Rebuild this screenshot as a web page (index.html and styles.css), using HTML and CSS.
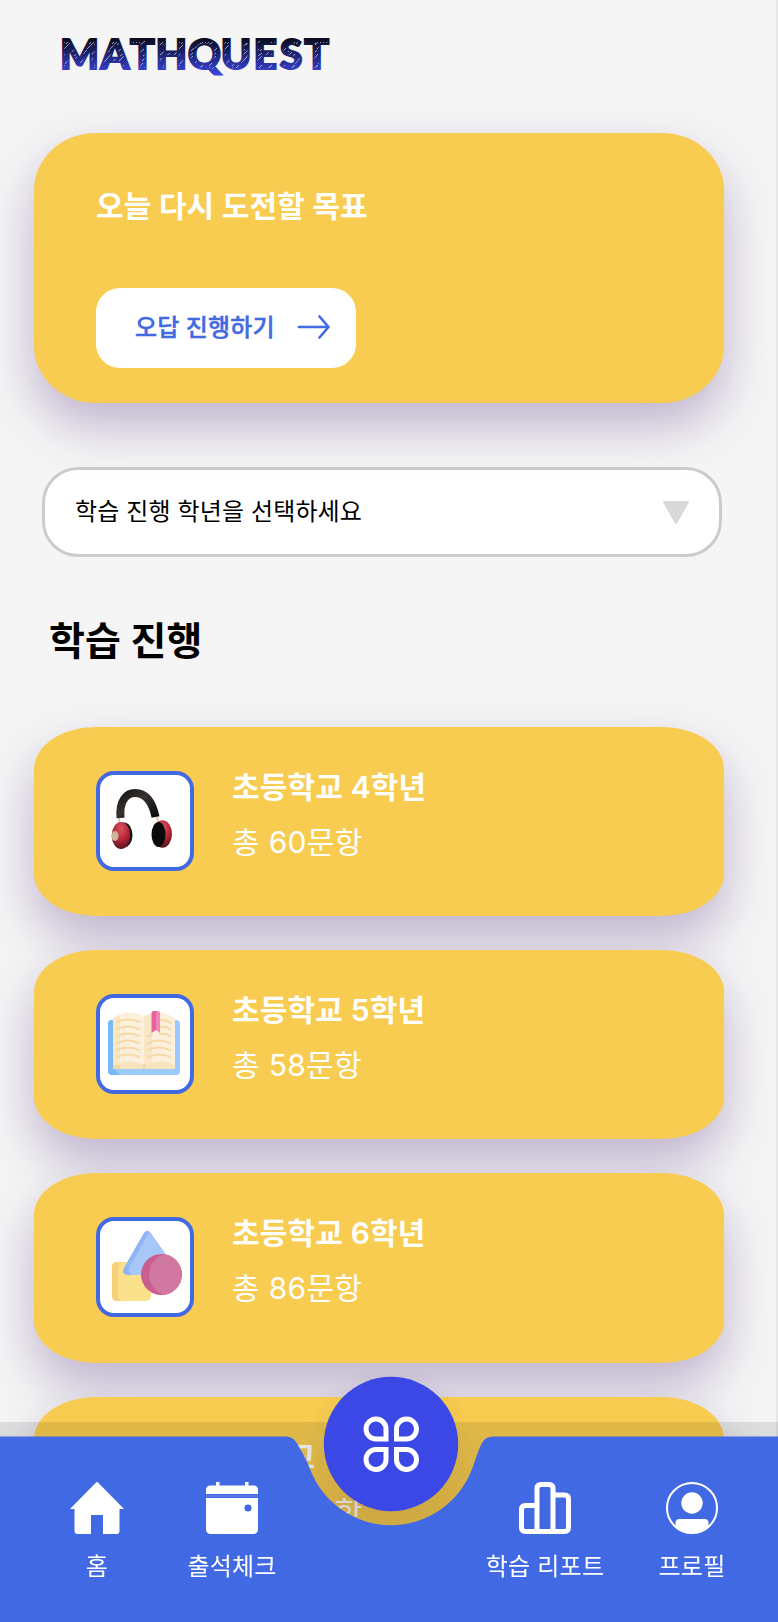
FILE: index.html
```html
<!DOCTYPE html>
<html lang="ko">
<head>
<meta charset="utf-8">
<title>MATHQUEST</title>
<link rel="stylesheet" href="styles.css">
</head>
<body>
<div class="app">
  <header class="header">
    <svg class="logo" width="280" height="56" viewBox="0 0 280 56">
      <defs>
        <linearGradient id="ink" gradientUnits="userSpaceOnUse" x1="0" y1="8" x2="0" y2="43">
          <stop offset="0" stop-color="#0b0d20"/><stop offset=".45" stop-color="#1f2474"/><stop offset="1" stop-color="#3a46dc"/>
        </linearGradient>
        <pattern id="hatch" patternUnits="userSpaceOnUse" width="23" height="56">
          <rect width="23" height="56" fill="url(#ink)"/>
          <path d="M1 17l6-5M8 18l7-7M15 14l5-4M3 24l5-5M12 24l7-6M1 32l4-4M9 33l5-6M17 30l5-5M3 39l5-4M12 40l4-4M18 38l4-4M6 14l3-3M20 20l3-3M5 28l4-5M15 35l3-3M2 21l3-3M18 25l4-3M10 13l2-2M7 36l2-2" stroke="#d5d8ea" stroke-width="1" stroke-opacity=".7"/>
        </pattern>
      </defs>
      <text class="logo-text" x="23.500 59 86.500 115.300 148.500 180 209.300 235 260.700" y="38.300" fill="url(#hatch)" stroke="url(#ink)" stroke-width="2">MATHQUEST</text>
    </svg>
  </header>

  <section class="card hero">
    <h2 class="card-title">오늘 다시 도전할 목표</h2>
    <button class="retry">
      <span class="retry-label">오답 진행하기</span>
      <svg width="34" height="26" viewBox="0 0 34 26" fill="none" stroke="#4169e1" stroke-width="2.600" stroke-linecap="round" stroke-linejoin="round"><path d="M2 12H31.500M22.500 1.500L31.500 12L22.500 22.500"/></svg>
    </button>
  </section>

  <div class="select">
    <span class="select-label">학습 진행 학년을 선택하세요</span>
    <svg width="26" height="24" viewBox="0 0 26 24"><path d="M1 2H25L13 23Z" fill="#d9d9d9" stroke="#d9d9d9" stroke-width="2" stroke-linejoin="round"/></svg>
  </div>

  <h1 class="section-title">학습 진행</h1>

  <main class="list">
    <article class="card course">
      <div class="thumb">
        <svg width="90" height="92" viewBox="0 0 90 92">
          <defs>
            <linearGradient id="band" x1="0" y1="0" x2="1" y2="1"><stop offset="0" stop-color="#181716"/><stop offset=".4" stop-color="#37322f"/><stop offset="1" stop-color="#0c0c0c"/></linearGradient>
            <radialGradient id="cup" cx=".5" cy=".25" r=".75"><stop offset="0" stop-color="#d85661"/><stop offset=".55" stop-color="#b52536"/><stop offset="1" stop-color="#5c1420"/></radialGradient>
          </defs>
          <path d="M19 43L19.500 49M57 42L58.500 48" stroke="#e0c5b0" stroke-width="2"/>
          <path d="M20.500 43C19 25 27 18 35 18C45 18 52 25 55.500 42" fill="none" stroke="url(#band)" stroke-width="8"/>
          <ellipse cx="24" cy="60" rx="8.500" ry="12.500" fill="#171314"/>
          <ellipse cx="21" cy="60.500" rx="9.300" ry="13.500" fill="url(#cup)"/>
          <ellipse cx="15" cy="61" rx="3.500" ry="5" fill="#cdb49c"/>
          <ellipse cx="62.500" cy="59" rx="9.500" ry="13.700" fill="url(#cup)"/>
          <ellipse cx="58.500" cy="59.500" rx="7" ry="12.500" fill="#0b0a0a"/>
        </svg>
      </div>
      <div class="info"><h3 class="card-title">초등학교 4학년</h3><p class="count">총 60문항</p></div>
    </article>

    <article class="card course">
      <div class="thumb">
        <svg width="90" height="92" viewBox="0 0 90 92">
          <rect x="8" y="22" width="72" height="55" rx="4" fill="#9bcaff"/>
          <path d="M12 22H14V71L20 77H12Q8 77 8 73V26Q8 22 12 22Z" fill="#78b9f8"/>
          <path d="M13 20Q28 10 44 18V71H15Q13 71 13 69Z" fill="#fcf0dc"/>
          <path d="M13 20L20 17V66L13 68Z" fill="#f8e6c5"/>
          <path d="M44 18Q60 10 75 20V69Q75 71 73 71H44Z" fill="#fcf0dc"/>
          <path d="M44 18L52 15V65L44 69Z" fill="#f8e6c5"/>
          <path d="M13 67Q29 60 44 67Q60 60 75 67V71H13Z" fill="#f9e3bd"/>
          <path d="M13 67H20V71H15Q13 71 13 69ZM43 66H45V71H43Z" fill="#f5d6a0"/>
          <path d="M17 24Q28 19 39 24M17 31Q28 26 39 31M17 38Q28 33 39 38M17 45Q28 40 39 45M17 52Q28 47 39 52M17 59Q28 54 39 59M60 22Q66 21 70 25M60 29Q66 28 70 31M60 36Q66 35 70 38M48 38L51 37M48 45Q59 40 70 45M48 52Q59 47 70 52M48 59Q59 54 70 59" fill="none" stroke="#f6d9a5" stroke-width="2.200" stroke-linecap="round"/>
          <path d="M54 13H58V32L56 32L51.500 35V15Q51.500 13 54 13Z" fill="#e8609e"/>
          <path d="M56 13H58Q60 13 60 15V35L56 32Z" fill="#f284b8"/>
        </svg>
      </div>
      <div class="info"><h3 class="card-title">초등학교 5학년</h3><p class="count">총 58문항</p></div>
    </article>

    <article class="card course">
      <div class="thumb">
        <svg width="90" height="92" viewBox="0 0 90 92">
          <rect x="12" y="41" width="39" height="39" rx="5" fill="#fae08b"/>
          <path d="M17 41H23Q18 41 18 46V75Q18 80 23 80H17Q12 80 12 75V46Q12 41 17 41Z" fill="#f7d078"/>
          <path d="M44 12Q47.500 8 51 12L76 48Q78 54 73 54H28Q21 53 24 47Z" fill="#a6c7f8"/>
          <path d="M44 12Q46 9 49.500 10.500L29 47Q28 53 33 54H28Q21 53 24 47Z" fill="#8eb5f5"/>
          <circle cx="61.500" cy="53.500" r="20.500" fill="#cb5d8f"/>
          <path d="M64 33.200A20.500 20.500 0 0 1 64 73.800C44 67 44 40 64 33.200Z" fill="#d078a0"/>
        </svg>
      </div>
      <div class="info"><h3 class="card-title">초등학교 6학년</h3><p class="count">총 86문항</p></div>
    </article>

    <article class="card course">
      <div class="thumb"></div>
      <div class="info"><h3 class="card-title">중학교 1학년</h3><p class="count">총 60문항</p></div>
    </article>
  </main>

  <nav class="nav">
    <svg class="nav-shape" width="778" height="252" viewBox="0 0 778 252">
      <defs>
        <linearGradient id="shade" x1="0" y1="0" x2="0" y2="1"><stop offset="0" stop-color="#000" stop-opacity=".09"/><stop offset="1" stop-color="#000" stop-opacity=".15"/></linearGradient>
        <radialGradient id="halo" gradientUnits="userSpaceOnUse" cx="391" cy="78" r="86"><stop offset=".76" stop-color="#000" stop-opacity=".03"/><stop offset="1" stop-color="#000" stop-opacity="0"/></radialGradient>
      </defs>
      <rect y="52" width="778" height="105" fill="url(#shade)"/>
      <circle cx="391" cy="78" r="86" fill="url(#halo)"/>
      <path d="M0 66.500H284C291 66.500 294.500 68.500 298 75C303 84 306 88.500 310 99A86.500 86.500 0 0 0 472 99C476 88.500 478 81 481 75C484 68.500 487 66.500 496 66.500H778V252H0Z" fill="#4169e3"/>
      <circle cx="391" cy="74" r="67.200" fill="#3b48e5"/>
      <g fill="none" stroke="#fff" stroke-width="5" stroke-linejoin="miter">
        <path d="M386 69V59.500A10 10 0 1 0 376 69Z"/>
        <path d="M396.500 69V59.500A10 10 0 1 1 406.500 69Z"/>
        <path d="M386 79.500V89A10 10 0 1 1 376 79.500Z"/>
        <path d="M396.500 79.500V89A10 10 0 1 0 406.500 79.500Z"/>
      </g>
    </svg>
    <div class="nav-items">
      <a class="nav-item home">
        <svg width="56" height="52" viewBox="0 0 56 52"><path d="M26.500 1Q28 -1 29.500 1L55 27H50.500V49Q50.500 52 47.500 52H34V33H22V52H8.500Q5.500 52 5.500 49V27H1Z" fill="#fff"/></svg>
        <span>홈</span>
      </a>
      <a class="nav-item attend">
        <svg width="52" height="52" viewBox="0 0 52 52" fill="#fff"><path d="M0 12V8Q0 3.500 4.500 3.500H10V0H13.500V3.500H39V0H42.500V3.500H47.500Q52 3.500 52 8V12ZM0 16H52V47Q52 52 47 52H5Q0 52 0 47Z"/><path d="M0 14H52" stroke="#fff" stroke-opacity=".25" stroke-width="1"/><circle cx="42" cy="26" r="3.600" fill="#4169e3"/></svg>
        <span>출석체크</span>
      </a>
      <a class="nav-item report">
        <svg width="52" height="52" viewBox="0 0 52 52" fill="none" stroke="#fff" stroke-width="5"><path d="M18 49.500H6.500Q2.500 49.500 2.500 45.500V27.500Q2.500 23.500 6.500 23.500H18M18 49.500V6.500Q18 2.500 22 2.500H30Q34 2.500 34 6.500V49.500ZM34 13H45.500Q49.500 13 49.500 17V45.500Q49.500 49.500 45.500 49.500H34"/></svg>
        <span>학습 리포트</span>
      </a>
      <a class="nav-item profile">
        <svg width="52" height="52" viewBox="0 0 52 52"><circle cx="26" cy="26" r="25" fill="none" stroke="#fff" stroke-width="2"/><circle cx="26" cy="21" r="10.700" fill="#fff"/><path d="M9.500 44V41Q9.500 37 13.500 37H38.500Q42.500 37 42.500 41V44Q36 51 26 51T9.500 44Z" fill="#fff"/></svg>
        <span>프로필</span>
      </a>
    </div>
  </nav>
</div>
</body>
</html>
```
FILE: styles.css
```css
* { box-sizing: border-box; }
html { overflow: hidden; }
body {
  margin: 0;
  font-family: Inter, "Noto Sans CJK KR", sans-serif;
  background: #f5f5f5;
}
h1, h2, h3, p { margin: 0; }

.app {
  position: relative;
  width: 778px;
  height: 1622px;
  overflow: hidden;
  padding: 0 54px 0 34px;
  border-right: 2px solid #e7e7e7;
}

.header { height: 132.500px; padding: 31px 0 0 22px; }
.logo { display: block; overflow: visible; }
.logo-text {
  font-family: Lato, sans-serif;
  font-weight: 900;
  font-size: 41px;
  text-anchor: middle;
  stroke-linejoin: miter;
}

.card {
  width: 689.500px;
  background: #f8cc50;
  color: #fff;
  box-shadow: 0 23px 50px rgba(110, 80, 147, .4);
}
.card-title {
  font-size: 30px;
  line-height: 44px;
  font-weight: 600;
  letter-spacing: .15px;
  white-space: nowrap;
}

.hero {
  position: relative;
  z-index: 1;
  height: 270.500px;
  padding: 51.500px 62px 0;
  border-radius: 62px / 57px;
}
.hero .card-title { letter-spacing: .05px; }
.retry {
  display: flex;
  align-items: center;
  justify-content: space-between;
  width: 260px;
  height: 80px;
  margin-top: 60px;
  padding: 0 25px 0 39px;
  border: 0;
  border-radius: 24px;
  background: #fff;
  color: #4169e1;
  font: 500 24px/36px Inter, "Noto Sans CJK KR", sans-serif;
  letter-spacing: .1px;
}
.retry-label {
  padding-bottom: 1px;
  -webkit-text-stroke: .4px #4169e1;
}

.select {
  display: flex;
  align-items: center;
  justify-content: space-between;
  width: 680px;
  height: 90px;
  margin: 64px 0 0 8px;
  padding: 0 30px;
  border: 3px solid #ccc;
  border-radius: 36px;
  background: #fff;
  color: #000;
  font-size: 24px;
  letter-spacing: .12px;
}
.select-label { padding-bottom: 5px; }

.section-title {
  margin: 56px 0 0 15px;
  font-size: 39px;
  line-height: 56px;
  font-weight: 600;
}

.list {
  display: flex;
  flex-direction: column;
  gap: 34px;
  margin-top: 58px;
}
.course {
  display: flex;
  gap: 38px;
  height: 189.200px;
  flex: none;
  padding: 44px 62px 0;
  border-radius: 62px / 42px;
}
.thumb {
  width: 98px;
  height: 100px;
  border: 4px solid #4169e1;
  border-radius: 18px;
  background: #fff;
}
.thumb svg { display: block; }
.info { margin-top: -6px; }
.count {
  margin-top: 11px;
  font-size: 30px;
  line-height: 44px;
  letter-spacing: .3px;
}

.nav {
  position: fixed;
  left: 0;
  bottom: 0;
  z-index: 2;
  width: 778px;
  height: 252px;
}
.nav-shape { position: absolute; left: 0; top: 0; }
.nav-items {
  position: relative;
  display: grid;
  grid-template-columns: 134px 136px 171px 148px 146px;
  padding: 112px 0 0 30px;
}
.report { grid-column: 4; }
.nav-item {
  display: flex;
  flex-direction: column;
  align-items: center;
  gap: 15px;
  color: #fff;
  font-size: 24px;
  line-height: 36px;
  letter-spacing: .2px;
  white-space: nowrap;
}
```
